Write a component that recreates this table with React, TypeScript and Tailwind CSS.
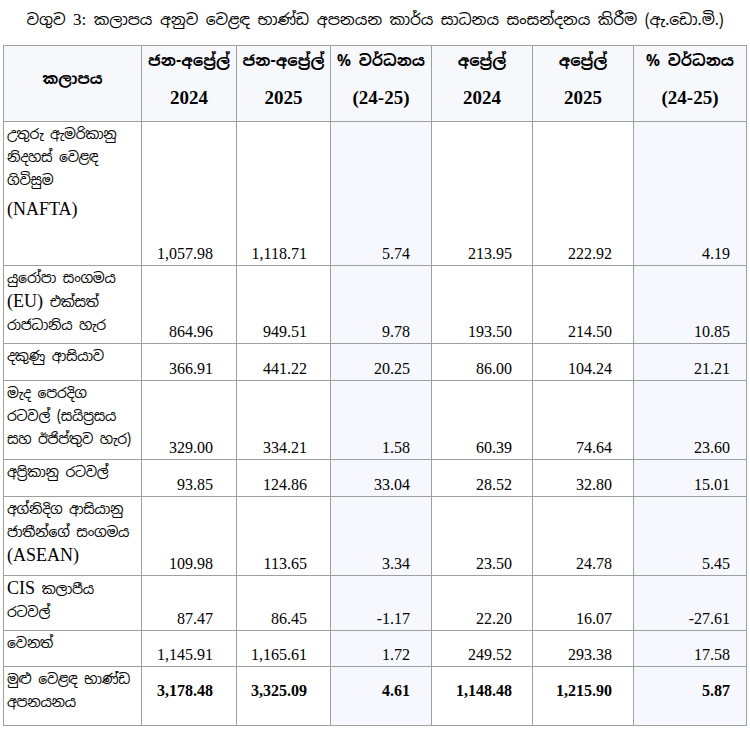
import React from 'react';

const SI = '"Noto Sans Sinhala", "Noto Serif Sinhala", "Iskoola Pota", "Liberation Serif", serif';

type Row = {
    label: React.ReactNode;
    vals: string[];
    h: string;
    total?: boolean;
};

const en = "font-['Liberation_Serif'] text-[18px] tracking-normal";

const rows: Row[] = [
    {
        label: (
            <>
                <div>උතුරු ඇමරිකානු</div>
                <div>නිදහස් වෙළඳ</div>
                <div>ගිවිසුම</div>
                <div className={`mt-[6px] ${en}`}>(NAFTA)</div>
            </>
        ),
        vals: ['1,057.98', '1,118.71', '5.74', '213.95', '222.92', '4.19'],
        h: 'h-[144px]',
    },
    {
        label: (
            <>
                <div>යුරෝපා සංගමය</div>
                <div><span className={en}>(EU)</span> එක්සත්</div>
                <div>රාජධානිය හැර</div>
            </>
        ),
        vals: ['864.96', '949.51', '9.78', '193.50', '214.50', '10.85'],
        h: 'h-[78px]',
    },
    {
        label: <div>දකුණු ආසියාව</div>,
        vals: ['366.91', '441.22', '20.25', '86.00', '104.24', '21.21'],
        h: 'h-[37px]',
    },
    {
        label: (
            <>
                <div>මැද පෙරදිග</div>
                <div>රටවල් (සයිප්‍රසය</div>
                <div>සහ ඊජිප්තුව හැර)</div>
            </>
        ),
        vals: ['329.00', '334.21', '1.58', '60.39', '74.64', '23.60'],
        h: 'h-[79px]',
    },
    {
        label: <div>අප්‍රිකානු රටවල්</div>,
        vals: ['93.85', '124.86', '33.04', '28.52', '32.80', '15.01'],
        h: 'h-[37px]',
    },
    {
        label: (
            <>
                <div>අග්නිදිග ආසියානු</div>
                <div>ජාතීන්ගේ සංගමය</div>
                <div className={en}>(ASEAN)</div>
            </>
        ),
        vals: ['109.98', '113.65', '3.34', '23.50', '24.78', '5.45'],
        h: 'h-[79px]',
    },
    {
        label: (
            <>
                <div><span className={en}>CIS</span> කලාපීය</div>
                <div>රටවල්</div>
            </>
        ),
        vals: ['87.47', '86.45', '-1.17', '22.20', '16.07', '-27.61'],
        h: 'h-[55px]',
    },
    {
        label: <div>වෙනත්</div>,
        vals: ['1,145.91', '1,165.61', '1.72', '249.52', '293.38', '17.58'],
        h: 'h-[36px]',
    },
    {
        label: (
            <>
                <div>මුළු වෙළඳ භාණ්ඩ</div>
                <div>අපනයනය</div>
            </>
        ),
        vals: ['3,178.48', '3,325.09', '4.61', '1,148.48', '1,215.90', '5.87'],
        h: 'h-[59px]',
        total: true,
    },
];

const cellPad = ['pr-[23px]', 'pr-[23px]', 'pr-[21px]', 'pr-[20px]', 'pr-[21px]', 'pr-[16px]'];
const tinted = [false, false, true, false, false, true];

const heads: [string, string][] = [
    ['ජන-අප්‍රේල්', '2024'],
    ['ජන-අප්‍රේල්', '2025'],
    ['% වර්ධනය', '(24-25)'],
    ['අප්‍රේල්', '2024'],
    ['අප්‍රේල්', '2025'],
    ['% වර්ධනය', '(24-25)'],
];

const App: React.FC = () => {
    return (
        <div className="w-[750px] h-[740px] bg-white text-black pt-[9px]">
            <h1
                className="text-center text-[15.5px] leading-[22px] font-normal whitespace-nowrap tracking-[-0.1px]"
                style={{ fontFamily: SI }}
            >
                වගුව <span className="font-['Liberation_Serif'] text-[17px]">3:</span> කලාපය අනුව වෙළඳ භාණ්ඩ අපනයන කාර්ය සාධනය සංසන්දනය කිරීම (ඇ.ඩො.මි.)
            </h1>
            <table className="ml-[3px] mt-[14px] w-[743px] table-fixed border-collapse border border-[#808080]">
                <colgroup>
                    <col className="w-[138px]" />
                    <col className="w-[95px]" />
                    <col className="w-[94px]" />
                    <col className="w-[101px]" />
                    <col className="w-[101px]" />
                    <col className="w-[101px]" />
                    <col className="w-[113px]" />
                </colgroup>
                <thead>
                    <tr className="h-[76px] bg-[#f7f8fc]">
                        <th className="border border-[#a0a0a0] align-middle pb-[9px] text-[15px] font-bold" style={{ fontFamily: SI }}>
                            කලාපය
                        </th>
                        {heads.map(([a, b], i) => (
                            <th key={i} className="border border-[#a0a0a0] align-middle pb-[9px] text-center">
                                <div className="text-[15.5px] leading-[22px] font-bold whitespace-nowrap" style={{ fontFamily: SI }}>
                                    {a}
                                </div>
                                <div className="mt-[15px] text-[19px] leading-[22px] font-bold font-['Liberation_Serif']">{b}</div>
                            </th>
                        ))}
                    </tr>
                </thead>
                <tbody>
                    {rows.map((r, ri) => (
                        <tr key={ri} className={r.h}>
                            <td
                                className="border border-[#a0a0a0] align-top pl-[3px] pt-[1px] text-[14px] leading-[23px] tracking-[-0.3px] whitespace-nowrap"
                                style={{ fontFamily: SI }}
                            >
                                {r.label}
                            </td>
                            {r.vals.map((v, vi) => (
                                <td
                                    key={vi}
                                    className={`border border-[#a0a0a0] text-right font-['Liberation_Serif'] text-[16px] leading-[20px] ${cellPad[vi]} ${tinted[vi] ? 'bg-[#f7f8fd]' : 'bg-white'} ${r.total ? 'align-middle font-bold pb-[10px]' : 'align-bottom pb-[1px]'}`}
                                >
                                    {v}
                                </td>
                            ))}
                        </tr>
                    ))}
                </tbody>
            </table>
        </div>
    );
};

export default App;
